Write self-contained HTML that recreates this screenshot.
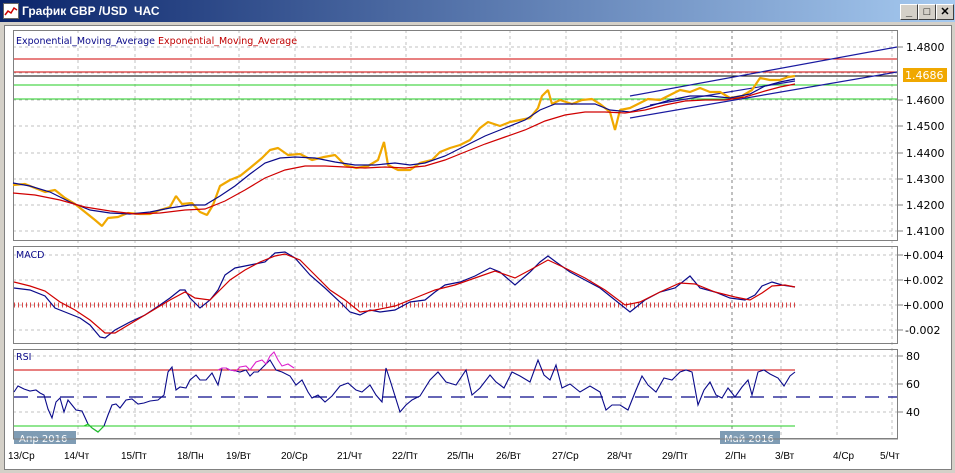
<!DOCTYPE html>
<html><head><meta charset="utf-8"><style>
body{margin:0;width:955px;height:473px;overflow:hidden;background:#d4d0c8;font-family:"Liberation Sans",sans-serif}
.title{position:absolute;left:0;top:0;width:955px;height:22px;background:linear-gradient(90deg,#0a246a,#a6caf0);}
.title span{position:absolute;left:22px;top:4px;color:#fff;font-weight:bold;font-size:12px}
.btn{position:absolute;top:4px;width:16px;height:14px;background:#d4d0c8;border:1px solid;border-color:#fff #404040 #404040 #fff;font-size:11px;line-height:14px;text-align:center;font-weight:bold}
</style></head><body>
<div class="title"><span>График GBP /USD &nbsp;ЧАС</span>
<svg style="position:absolute;left:3px;top:3px" width="16" height="16"><rect x="0.5" y="0.5" width="15" height="15" fill="#fff" stroke="#666"/><polyline points="2,12 5,8 8,10 11,5 14,7" fill="none" stroke="#c00" stroke-width="1.5"/></svg>
<div class="btn" style="left:900px">_</div><div class="btn" style="left:918px">□</div><div class="btn" style="left:936px">✕</div></div>
<div style="position:absolute;left:4px;top:25px;width:946px;height:443px;background:#fff;border:1px solid #808080"></div>
<svg style="position:absolute;left:0;top:0" width="955" height="473" font-family="DejaVu Sans,sans-serif">
<g stroke="#c0c0c0" stroke-dasharray="3,3" stroke-width="1">
<line x1="78" y1="30" x2="78" y2="438"/><line x1="135" y1="30" x2="135" y2="438"/><line x1="191" y1="30" x2="191" y2="438"/><line x1="239" y1="30" x2="239" y2="438"/><line x1="295" y1="30" x2="295" y2="438"/><line x1="351" y1="30" x2="351" y2="438"/><line x1="406" y1="30" x2="406" y2="438"/><line x1="461" y1="30" x2="461" y2="438"/><line x1="510" y1="30" x2="510" y2="438"/><line x1="566" y1="30" x2="566" y2="438"/><line x1="621" y1="30" x2="621" y2="438"/><line x1="676" y1="30" x2="676" y2="438"/><line x1="781" y1="30" x2="781" y2="438"/><line x1="837" y1="30" x2="837" y2="438"/><line x1="892" y1="30" x2="892" y2="438"/>
<line x1="13" y1="47" x2="898" y2="47"/><line x1="13" y1="73" x2="898" y2="73"/><line x1="13" y1="100" x2="898" y2="100"/><line x1="13" y1="126" x2="898" y2="126"/><line x1="13" y1="153" x2="898" y2="153"/><line x1="13" y1="179" x2="898" y2="179"/><line x1="13" y1="205" x2="898" y2="205"/><line x1="13" y1="231" x2="898" y2="231"/>
<line x1="13" y1="255" x2="898" y2="255"/><line x1="13" y1="280" x2="898" y2="280"/><line x1="13" y1="305" x2="898" y2="305"/><line x1="13" y1="330" x2="898" y2="330"/>
<line x1="13" y1="356" x2="898" y2="356"/><line x1="13" y1="384" x2="898" y2="384"/><line x1="13" y1="412" x2="898" y2="412"/>
</g>
<line x1="732" y1="30" x2="732" y2="438" stroke="#808080" stroke-dasharray="3,3"/>
<g fill="none" stroke="#808080"><rect x="13.5" y="30.5" width="884" height="210"/><rect x="13.5" y="246.5" width="884" height="97"/><rect x="13.5" y="349.5" width="884" height="89"/></g>
<g stroke="#808080"><line x1="898" y1="47" x2="903" y2="47"/><line x1="898" y1="100" x2="903" y2="100"/><line x1="898" y1="126" x2="903" y2="126"/><line x1="898" y1="153" x2="903" y2="153"/><line x1="898" y1="179" x2="903" y2="179"/><line x1="898" y1="205" x2="903" y2="205"/><line x1="898" y1="231" x2="903" y2="231"/><line x1="898" y1="255" x2="903" y2="255"/><line x1="898" y1="280" x2="903" y2="280"/><line x1="898" y1="305" x2="903" y2="305"/><line x1="898" y1="330" x2="903" y2="330"/><line x1="898" y1="356" x2="903" y2="356"/><line x1="898" y1="384" x2="903" y2="384"/><line x1="898" y1="412" x2="903" y2="412"/></g>
<line x1="14" y1="59" x2="897" y2="59" stroke="#d00000"/><line x1="14" y1="72" x2="897" y2="72" stroke="#d00000"/><line x1="14" y1="76" x2="897" y2="76" stroke="#000"/>
<line x1="14" y1="85" x2="897" y2="85" stroke="#22cc22"/><line x1="14" y1="99" x2="897" y2="99" stroke="#22cc22"/>
<g stroke="#1a1aa0" stroke-width="1.2"><line x1="630" y1="96" x2="897" y2="47"/><line x1="630" y1="118" x2="897" y2="72"/><line x1="650" y1="105" x2="795" y2="81"/></g>
<polyline fill="none" stroke="#f0a800" stroke-width="2.2" stroke-linejoin="bevel" points="13,185 25,184 35,188 45,192 55,190 65,198 75,204 85,212 95,220 102,226 108,218 118,217 128,213 140,214 150,214 160,210 170,207 176,196 182,204 192,203 200,212 207,215 213,205 220,186 230,180 240,176 250,168 262,158 270,150 278,148 288,155 300,154 312,160 324,157 335,155 345,165 356,168 368,166 378,160 384,142 388,165 398,170 410,170 420,163 432,160 440,152 450,148 460,145 470,140 480,128 488,122 500,126 510,122 520,120 530,118 538,108 542,96 548,90 552,104 560,100 572,104 582,100 592,99 600,104 610,112 615,130 620,110 630,108 640,103 648,99 660,100 668,96 680,90 690,92 700,88 710,92 720,92 730,98 742,96 752,90 760,78 770,80 780,80 788,77 795,76"/>
<polyline fill="none" stroke="#0a0a8a" stroke-width="1.2" points="13,183 30,186 50,192 70,202 90,210 110,213 130,214 150,212 170,208 190,205 205,205 220,196 235,186 250,174 265,163 280,158 295,157 315,158 335,162 355,165 375,165 395,163 410,165 425,163 445,156 465,146 485,136 505,128 525,120 540,110 555,104 575,104 595,104 610,110 630,112 650,106 670,100 690,96 710,96 730,98 750,94 765,86 780,82 795,79"/>
<polyline fill="none" stroke="#d00000" stroke-width="1.2" points="13,193 35,195 60,200 85,207 110,211 135,214 160,213 185,210 205,209 225,201 245,190 265,178 285,170 305,166 325,166 345,167 365,168 385,167 405,168 425,166 445,160 465,152 485,144 505,137 525,130 545,121 565,115 585,112 605,112 625,113 645,110 665,105 685,101 705,100 725,100 745,97 765,91 780,87 795,84"/>
<line x1="14" y1="305" x2="795" y2="305" stroke="#cc0000" stroke-width="5" stroke-dasharray="1,3" opacity="0.7"/>
<polyline fill="none" stroke="#0a0a8a" stroke-width="1.2" points="14,288 30,290 45,296 55,308 65,312 80,318 90,325 100,337 105,338 115,330 130,322 145,315 160,305 170,298 180,290 185,290 190,298 200,308 210,300 218,290 225,275 235,268 245,266 255,264 265,262 275,253 285,252 295,258 310,275 325,288 340,302 350,312 360,315 370,310 380,312 395,310 410,302 425,300 435,292 445,285 460,282 475,276 490,268 500,272 515,285 530,272 540,262 548,256 556,262 570,272 585,280 600,288 615,300 630,312 645,300 660,292 675,288 690,276 700,288 715,292 730,298 745,300 755,295 762,286 772,282 782,285 795,287"/>
<polyline fill="none" stroke="#d00000" stroke-width="1.2" points="14,282 30,286 45,291 60,302 75,310 90,320 105,333 115,333 130,324 150,312 170,300 185,292 195,298 210,300 220,290 230,280 245,270 260,262 275,256 285,254 300,260 315,275 330,290 345,300 360,312 375,310 395,306 415,298 435,290 455,285 475,278 495,271 515,278 530,270 548,260 565,268 585,278 605,290 625,305 640,302 660,292 680,283 695,284 715,292 735,297 750,300 762,293 772,286 785,285 795,287"/>
<line x1="14" y1="370" x2="795" y2="370" stroke="#d00000"/><line x1="14" y1="426" x2="795" y2="426" stroke="#22cc22"/>
<line x1="14" y1="397" x2="897" y2="397" stroke="#0a0a8a" stroke-width="1.2" stroke-dasharray="14,9"/>
<polyline fill="none" stroke="#0a0a8a" stroke-width="1.1" points="14,392 18,386 24,389 30,391 36,390 40,393 44,395 48,409 52,418 56,402 60,398 64,412 68,400 72,405 76,410 82,411 88,424 92,428 98,432 104,426 108,415 112,405 116,404 120,408 126,400 132,399 138,404 144,403 150,401 158,400 164,395 168,372 172,367 176,390 180,387 186,388 190,380 196,375 200,380 206,380 212,373 218,385 222,368 226,368 230,370 236,371 240,372 246,370 250,376 254,372 258,372 264,366 270,360 276,370 282,372 290,376 296,385 302,380 308,392 312,398 318,395 325,402 332,396 340,386 348,383 356,390 362,392 370,385 376,395 382,402 386,368 390,380 395,396 400,412 406,405 412,400 420,396 430,380 438,372 446,382 456,385 466,370 472,395 480,388 490,375 496,382 504,388 512,372 520,376 530,382 538,360 544,375 550,380 556,365 562,388 570,384 580,392 590,386 600,392 606,410 612,405 620,405 628,410 636,390 642,376 648,385 656,392 664,378 672,380 680,372 686,370 692,372 698,405 704,390 710,382 716,395 722,398 728,388 735,397 742,387 748,380 752,395 758,372 764,370 770,374 778,378 784,386 790,376 795,372"/>
<polyline fill="none" stroke="#dd22cc" stroke-width="1.1" points="218,370 222,368 226,368 230,370 236,371 240,367 246,366 250,370 256,362 262,360 266,364 270,356 274,352 278,360 282,366 288,364 294,368"/>
<polyline fill="none" stroke="#22cc22" stroke-width="1.1" points="84,426 88,424 92,428 98,432 104,426"/>
<g font-size="11" fill="#000"><text x="906" y="51">1.4800</text><text x="906" y="104">1.4600</text><text x="906" y="130">1.4500</text><text x="906" y="157">1.4400</text><text x="906" y="183">1.4300</text><text x="906" y="209">1.4200</text><text x="906" y="235">1.4100</text>
<text x="903" y="259">+0.004</text><text x="903" y="284">+0.002</text><text x="903" y="309">+0.000</text><text x="905" y="334">-0.002</text>
<text x="906" y="360">80</text><text x="906" y="388">60</text><text x="906" y="416">40</text></g>
<rect x="903" y="68" width="44" height="14" fill="#f0a800"/><text x="905" y="79" font-size="11" fill="#fff">1.4686</text>
<text x="16" y="44" font-size="9.5" fill="#0a0a8a">Exponential_Moving_Average <tspan fill="#c00000">Exponential_Moving_Average</tspan></text>
<text x="16" y="258" font-size="9.5" fill="#0a0a8a">MACD</text><text x="16" y="360" font-size="9.5" fill="#0a0a8a">RSI</text>
<rect x="14" y="431" width="62" height="13" fill="#7f9cb4"/><text x="19" y="442" font-size="10" fill="#fff">Апр 2016</text>
<rect x="720" y="431" width="60" height="13" fill="#7f9cb4"/><text x="724" y="442" font-size="10" fill="#fff">Май 2016</text>
<g stroke="#808080"><line x1="13" y1="439" x2="898" y2="439"/></g>
<g font-size="10" fill="#000" font-family="Liberation Sans,sans-serif"><text x="8" y="459">13/Ср</text><text x="64" y="459">14/Чт</text><text x="121" y="459">15/Пт</text><text x="177" y="459">18/Пн</text><text x="226" y="459">19/Вт</text><text x="281" y="459">20/Ср</text><text x="337" y="459">21/Чт</text><text x="392" y="459">22/Пт</text><text x="447" y="459">25/Пн</text><text x="496" y="459">26/Вт</text><text x="552" y="459">27/Ср</text><text x="607" y="459">28/Чт</text><text x="662" y="459">29/Пт</text><text x="725" y="459">2/Пн</text><text x="775" y="459">3/Вт</text><text x="833" y="459">4/Ср</text><text x="880" y="459">5/Чт</text></g>
</svg>
</body></html>
